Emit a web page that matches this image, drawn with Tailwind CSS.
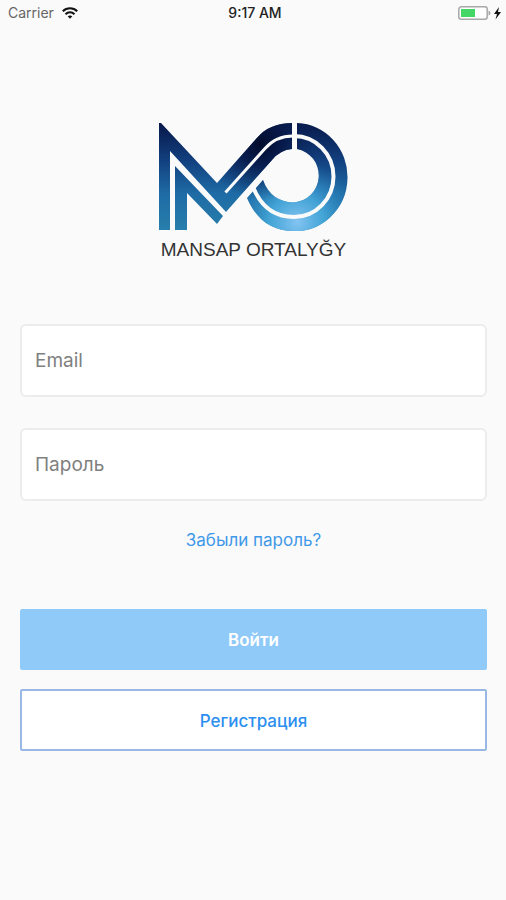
<!DOCTYPE html>
<html lang="ru">
<head>
<meta charset="utf-8">
<meta name="viewport" content="width=device-width, initial-scale=1">
<title>Mansap Ortalygy</title>
<script src="https://cdn.jsdelivr.net/npm/@tailwindcss/browser@4"></script>
</head>
<body class="min-h-screen bg-[#fafafa] font-['Inter','Roboto',sans-serif]">
<header class="grid grid-cols-3 items-center h-[26px] pl-2 pr-1 text-sm leading-4">
  <div class="flex items-center gap-2 text-[#666]">
    <span>Carrier</span>
    <svg class="w-4 h-3" viewBox="0 0 16 12" fill="none" stroke="#111" stroke-width="2" aria-hidden="true">
      <path d="M.8 4.3C4.8.3 11.2.3 15.2 4.3M3.5 7.2c2.5-2.5 6.500-2.500 9 0"/>
      <path d="M5.700 9.300c1.300-1.200 3.300-1.200 4.600 0L8 11.700z" fill="#111" stroke="none"/>
    </svg>
  </div>
  <span class="text-center font-medium text-[#222]">9:17 AM</span>
  <svg class="justify-self-end w-11 h-4" viewBox="0 0 44 16" aria-hidden="true">
    <rect x=".8" y="1.800" width="28.400" height="12.400" rx="2.500" fill="#fff" stroke="#a8a8a8" stroke-width="1.500"/>
    <rect x="3" y="4" width="14" height="8" fill="#45d765"/>
    <path d="M30.500 5.500q2 .5 2 2.500t-2 2.500z" fill="#a8a8a8"/>
    <path d="M41 2l-5 7h3l-1.500 5.500L43 7h-3z" fill="#111"/>
  </svg>
</header>
<main class="pl-5 pr-[19px] pt-24 pb-8">
  <div class="flex flex-col items-center">
    <svg class="w-[190px] h-[110px]" viewBox="160 122 190 110" role="img" aria-label="Mansap Ortalyğy">
      <defs>
        <linearGradient id="base" gradientUnits="userSpaceOnUse" x1="0" y1="123" x2="0" y2="231">
          <stop offset="0" stop-color="#08184a"/><stop offset=".35" stop-color="#12407f"/><stop offset=".65" stop-color="#1e6ba5"/><stop offset="1" stop-color="#287fac"/>
        </linearGradient>
        <radialGradient id="glow" gradientUnits="userSpaceOnUse" cx="298" cy="222" r="62">
          <stop offset="0" stop-color="#84c4f2"/><stop offset=".45" stop-color="#4aaee0" stop-opacity=".8"/><stop offset="1" stop-color="#2a80c0" stop-opacity="0"/>
        </radialGradient>
        <radialGradient id="night" gradientUnits="userSpaceOnUse" cx="262" cy="144" r="56">
          <stop offset="0" stop-color="#030c2c"/><stop offset=".4" stop-color="#061544" stop-opacity=".8"/><stop offset="1" stop-color="#0b2a60" stop-opacity="0"/>
        </radialGradient>
        <clipPath id="mark">
          <path d="M293 123C278 123 266 128 257 139L218 183 162 123H160V230H171V151L227 212 273 160Q281 150 293 149Z"/>
          <path d="M298 123A52 54 0 0 1 295 231C272 231 257 219 248 198L264 180C269 195 281 202.500 295 202.500A26.500 27 0 0 0 298 149Z"/>
          <path d="M176 166 224 216 218 224 188 193V230H176Z"/>
        </clipPath>
      </defs>
      <g clip-path="url(#mark)">
        <path fill="url(#base)" d="M159 122h191v110H159z"/>
        <path fill="url(#glow)" d="M159 122h191v110H159z"/>
        <path fill="url(#night)" d="M159 122h191v110H159z"/>
      </g>
      <g fill="none" stroke="#fafafa">
        <path stroke-width="3" d="M226.500 192.500 266 148.500Q277 136 294 136"/>
        <path stroke-width="4" d="M295 136A39.500 40.500 0 0 1 295 217C276 217 262 207 254 187"/>
      </g>
    </svg>
    <p class="mt-1 font-['Liberation_Sans',sans-serif] text-[19px] leading-7 text-[#333]">MANSAP ORTALYĞY</p>
  </div>
  <form class="mt-[60px] flex flex-col">
    <input type="email" aria-label="Email" placeholder="Email" class="h-[73px] w-full rounded-md border-2 border-[#ececec] bg-white px-[13px] text-[19px] text-[#333] placeholder:text-[#808080] outline-none">
    <input type="password" aria-label="Пароль" placeholder="Пароль" class="mt-[31px] h-[73px] w-full rounded-md border-2 border-[#ececec] bg-white px-[13px] text-[19px] text-[#333] placeholder:text-[#808080] outline-none">
    <a href="#" class="mt-[27px] self-center text-[17px] leading-6 text-[#4098e8]">Забыли пароль?</a>
    <button type="submit" class="mt-[57px] h-[61px] rounded-xs bg-[#90caf9] pt-0.5 text-[17px] font-semibold text-white">Войти</button>
    <button type="button" class="mt-[19px] h-[62px] rounded-xs border-2 border-[#9ab8e6] bg-white pt-1 text-[17px] font-medium text-[#2c8ff0]">Регистрация</button>
  </form>
</main>
</body>
</html>
